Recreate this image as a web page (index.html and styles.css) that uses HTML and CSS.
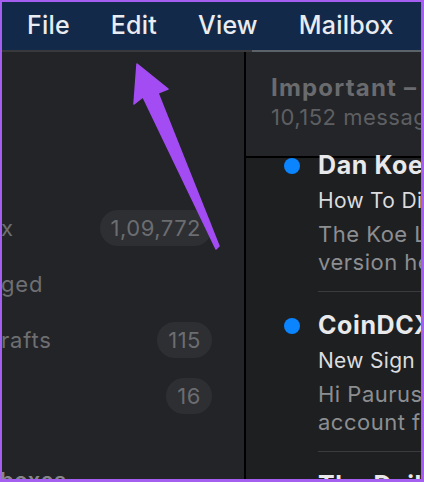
FILE: index.html
```html
<!DOCTYPE html>
<html lang="en">
<head>
  <meta charset="UTF-8">
  <meta name="viewport" content="width=device-width, initial-scale=1.0">
  <title>Mail - Edit menu</title>
  <link rel="stylesheet" href="styles.css">
</head>
<body>

  <div class="window">
    <!-- Menu Bar -->
    <div class="menubar">
      <span class="menu-item">File</span>
      <span class="menu-item">Edit</span>
      <span class="menu-item">View</span>
      <span class="menu-item">Mailbox</span>
    </div>
    <div class="menubar-rule"></div>

    <div class="main">
      <!-- Sidebar -->
      <div class="sidebar">
        <div class="side-row">
          <span class="side-label">x</span>
          <span class="badge">1,09,772</span>
        </div>
        <div class="side-row">
          <span class="side-label">ged</span>
        </div>
        <div class="side-row">
          <span class="side-label">rafts</span>
          <span class="badge">115</span>
        </div>
        <div class="side-row">
          <span class="side-label"></span>
          <span class="badge">16</span>
        </div>
        <div class="side-section">boxes</div>
      </div>

      <div class="split"></div>

      <!-- Message List -->
      <div class="pane">
        <div class="pane-head">
          <div class="pane-title">Important – Gmail</div>
          <div class="pane-count">10,152 messages</div>
        </div>
        <div class="list">
          <div class="msg">
            <span class="dot"></span>
            <div class="msg-body">
              <div class="sender">Dan Koe</div>
              <div class="subject">How To Digital</div>
              <div class="preview">The Koe Letter</div>
              <div class="preview">version here</div>
            </div>
          </div>
          <div class="msg">
            <span class="dot"></span>
            <div class="msg-body">
              <div class="sender">CoinDCX</div>
              <div class="subject">New Sign In</div>
              <div class="preview">Hi Paurush</div>
              <div class="preview">account from</div>
            </div>
          </div>
          <div class="msg">
            <span class="dot hidden"></span>
            <div class="msg-body">
              <div class="sender">The Daily</div>
            </div>
          </div>
        </div>
      </div>
    </div>
  </div>

  <!-- Annotation Arrow -->
  <svg class="arrow" width="424" height="482" viewBox="0 0 424 482">
    <polygon points="137,64 168,89 158,93 219,246 216,249 143,97 134,104" fill="#a34cf4" stroke="#a34cf4" stroke-width="1.5" stroke-linejoin="round"/>
  </svg>

</body>
</html>
```

FILE: styles.css
```css
/* General Reset */
* {
  margin: 0;
  padding: 0;
  box-sizing: border-box;
  font-family: Inter, "Open Sans", Arial, sans-serif;
}

body {
  position: relative;
  width: 424px;
  height: 482px;
  background-color: #a55ff0;
  overflow: hidden;
}

/* Window Frame */
.window {
  width: 424px;
  height: 482px;
  border: solid #a55ff0;
  border-width: 2px 3px 3px 2px;
  background-color: #232428;
  display: flex;
  flex-direction: column;
  overflow: hidden;
}

/* Menu Bar */
.menubar {
  height: 48px;
  flex-shrink: 0;
  background-color: #13294a;
  display: flex;
  align-items: center;
  gap: 41px;
  padding: 0 0 2px 25px;
  color: #e9ecf1;
  font-size: 25px;
  font-weight: 500;
  letter-spacing: 0.2px;
  white-space: nowrap;
}

.menubar-rule {
  height: 2px;
  flex-shrink: 0;
  background: linear-gradient(to right, #38393c 250px, #5c626a 250px);
}

.main {
  flex: 1;
  display: flex;
  min-height: 0;
}

/* Sidebar */
.sidebar {
  width: 242px;
  flex-shrink: 0;
  background-color: #232428;
  padding: 148px 32px 0 0;
  overflow: hidden;
}

.side-row {
  height: 56px;
  display: flex;
  align-items: center;
  justify-content: space-between;
}

.side-label {
  font-size: 22px;
  letter-spacing: 0.8px;
  color: #6e6f72;
  margin-left: -1px;
}

.badge {
  height: 36px;
  min-width: 46px;
  padding: 0 11px;
  border-radius: 18px;
  background-color: #2e2f33;
  color: #6c6d70;
  font-size: 22px;
  letter-spacing: 0.5px;
  display: flex;
  align-items: center;
  justify-content: center;
}

.side-section {
  margin-top: 28px;
  height: 56px;
  display: flex;
  align-items: center;
  font-size: 22px;
  font-weight: 600;
  letter-spacing: 0.6px;
  color: #86878a;
  margin-left: -2px;
}

.split {
  width: 2px;
  flex-shrink: 0;
  background-color: #000;
}

/* Message Pane */
.pane {
  flex: 1;
  min-width: 0;
  background-color: #1e1f21;
  display: flex;
  flex-direction: column;
  overflow: hidden;
  white-space: nowrap;
}

.pane-head {
  height: 106px;
  flex-shrink: 0;
  background-color: #242528;
  border-bottom: 2px solid #000;
  padding: 22px 0 0 25px;
}

.pane-title {
  font-size: 24px;
  font-weight: 700;
  letter-spacing: 1.2px;
  color: #6a6b6e;
  line-height: 28px;
}

.pane-count {
  font-size: 22px;
  letter-spacing: 0.5px;
  color: #5e5f62;
  line-height: 28px;
  margin-top: 1px;
}

.list {
  margin-top: -10px;
}

.msg {
  display: flex;
  padding-top: 16px;
}

.msg:first-child {
  padding-top: 0;
}

.dot {
  width: 16px;
  height: 16px;
  border-radius: 50%;
  background-color: #0a84ff;
  margin: 10px 18px 0 38px;
  flex-shrink: 0;
}

.dot.hidden {
  visibility: hidden;
}

.msg-body {
  flex: 1;
  min-width: 0;
  border-bottom: 1px solid #3a3b3e;
  padding-bottom: 15px;
}

.sender {
  font-size: 25px;
  font-weight: 700;
  letter-spacing: 0.6px;
  color: #e9e9eb;
  line-height: 34px;
}

.subject {
  font-size: 21px;
  letter-spacing: 0.3px;
  color: #dcdcde;
  line-height: 38px;
}

.preview {
  font-size: 22px;
  letter-spacing: 0.5px;
  color: #8d8e91;
  line-height: 28px;
}

/* Annotation Arrow */
.arrow {
  position: absolute;
  top: 0;
  left: 0;
}
```
